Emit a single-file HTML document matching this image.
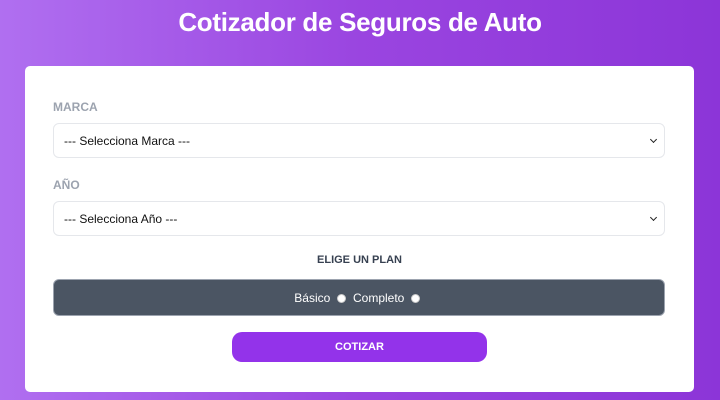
<!DOCTYPE html>
<html><head><meta charset="utf-8"><style>
*{box-sizing:border-box;margin:0;padding:0}
body{width:720px;height:400px;overflow:hidden;font-family:"Liberation Sans",sans-serif;background:linear-gradient(90deg,#b06ff0 0%,#9a45e0 50%,#8c35d8 100%);position:relative}
h1{position:absolute;top:7px;left:0;width:720px;text-align:center;color:#fff;font-size:26px;font-weight:900;letter-spacing:-0.3px}
.card{position:absolute;left:25px;top:66px;width:669px;height:326px;background:#fff;border-radius:5px}
.lbl{position:absolute;left:28px;font-size:12px;font-weight:bold;color:#9ca3af}
.sel{position:absolute;left:28px;width:612px;height:35px;border:1px solid #e5e7eb;border-radius:6px;font-size:12px;color:#111;padding:10px 0 0 10px}
.sel:after{content:"";position:absolute;right:8px;top:13px;width:4px;height:4px;border-right:1.5px solid #222;border-bottom:1.5px solid #222;transform:rotate(45deg)}
.plan{position:absolute;left:0;width:669px;top:188px;text-align:center;font-size:11px;font-weight:bold;color:#374151}
.bar{position:absolute;left:28px;top:213px;width:612px;height:37px;background:#4b5563;border-radius:6px;border:1px solid #9ca3af;color:#fff;font-size:12px;text-align:center;padding-top:11px}
.r{display:inline-block;width:9px;height:9px;border-radius:50%;background:#fff;border:1px solid #ccc;vertical-align:-1px;margin:0 4px 0 3px}
.btn{position:absolute;left:207px;top:266px;width:255px;height:30px;background:#9333ea;border-radius:10px;color:#fff;font-weight:bold;font-size:11px;text-align:center;line-height:30px}
</style></head><body>
<h1>Cotizador de Seguros de Auto</h1>
<div class="card">
<div class="lbl" style="top:34px">MARCA</div>
<div class="sel" style="top:57px">--- Selecciona Marca ---</div>
<div class="lbl" style="top:112px">AÑO</div>
<div class="sel" style="top:135px">--- Selecciona Año ---</div>
<div class="plan">ELIGE UN PLAN</div>
<div class="bar">Básico <span class="r"></span> Completo <span class="r"></span></div>
<div class="btn">COTIZAR</div>
</div>
</body></html>
